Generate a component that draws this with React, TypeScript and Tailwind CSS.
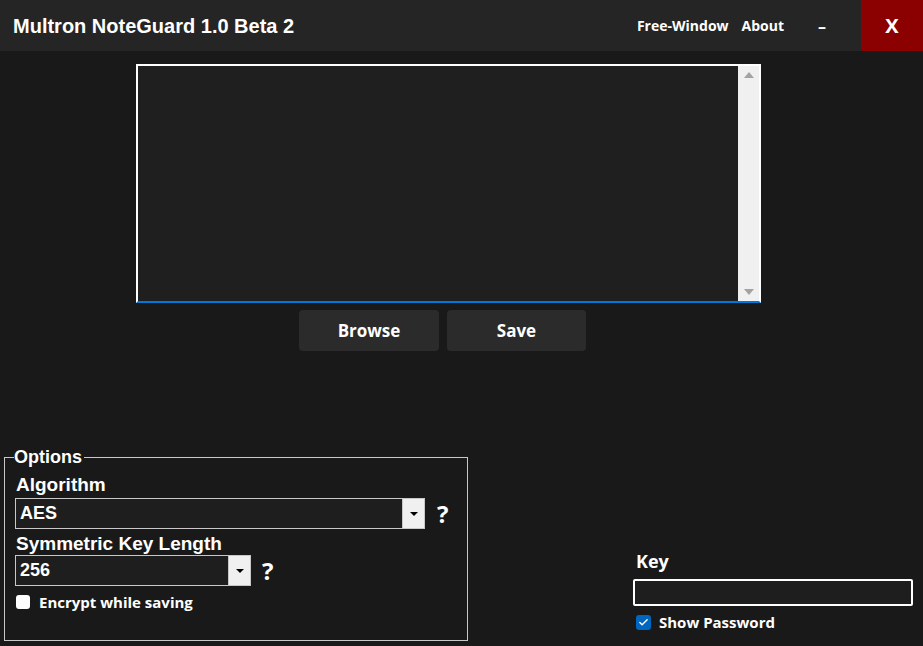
import { Check } from "lucide-react";

const arial = { fontFamily: '"Liberation Sans", Arial, sans-serif' };
const segoe = { fontFamily: '"Open Sans", "Noto Sans", sans-serif' };

function Select({ value, width }: { value: string; width: string }) {
  return (
    <div className={`flex h-[31px] ${width} border border-[#c8c8c8] bg-[#1e1e1e]`}>
      <div className="flex flex-1 items-center pl-[4px] text-[18px] font-bold text-white" style={arial}>
        {value}
      </div>
      <div className="flex w-[22px] items-center justify-center border-l border-[#c8c8c8] bg-[#f0f0f0]">
        <span className="h-0 w-0 border-x-[4px] border-t-[4px] border-x-transparent border-t-black" />
      </div>
    </div>
  );
}

export default function App() {
  return (
    <div className="flex h-[646px] w-[923px] flex-col overflow-hidden bg-[#191919] text-white">
      {/* title bar */}
      <div className="flex h-[51px] shrink-0 items-center bg-[#252525]">
        <div className="pl-[13px] text-[20px] font-bold" style={arial}>
          Multron NoteGuard 1.0 Beta 2
        </div>
        <div className="ml-auto flex h-full items-center text-[14px] font-bold" style={segoe}>
          <span className="mr-[13px]">Free-Window</span>
          <span>About</span>
          <span className="ml-[34px] mr-[35px] text-[16px]">–</span>
          <div className="flex h-full w-[62px] items-center justify-center bg-[#8b0000] text-[20px]" style={segoe}>
            X
          </div>
        </div>
      </div>

      {/* text area */}
      <div className="ml-[136px] mt-[13px] flex h-[239px] w-[625px] border-x-2 border-t-2 border-b-2 border-white border-b-[#0078d7] bg-[#1f1f1f]">
        <div className="flex-1" />
        <div className="flex w-[21px] flex-col items-center justify-between bg-[#f0f0f0] py-[6px]">
          <span className="h-0 w-0 border-x-[5px] border-b-[6px] border-x-transparent border-b-[#a3a3a3]" />
          <span className="h-0 w-0 border-x-[5px] border-t-[6px] border-x-transparent border-t-[#a3a3a3]" />
        </div>
      </div>

      {/* buttons */}
      <div className="ml-[299px] mt-[7px] flex gap-[8px]">
        <button className="h-[41px] w-[140px] rounded-[4px] bg-[#2b2b2b] text-[17px] font-bold leading-none" style={segoe}>
          Browse
        </button>
        <button className="h-[41px] w-[139px] rounded-[4px] bg-[#2b2b2b] text-[17px] font-bold leading-none" style={segoe}>
          Save
        </button>
      </div>

      {/* bottom */}
      <div className="mb-[5px] mt-auto flex items-end">
        <fieldset className="ml-[4px] h-[193px] w-[464px] border border-[#c8c8c8] px-[10px]">
          <legend className="-ml-[1px] px-0 pr-[2px] text-[18px] font-bold leading-[18px]" style={arial}>
            Options
          </legend>
          <div className="ml-[1px] mt-[8px] text-[19px] font-bold leading-[22px]" style={arial}>
            Algorithm
          </div>
          <div className="mt-[2px] flex h-[31px] items-center">
            <Select value="AES" width="w-[410px]" />
            <span className="ml-[12px] text-[24px] font-bold leading-none" style={segoe}>?</span>
          </div>
          <div className="ml-[1px] mt-[4px] text-[19px] font-bold leading-[22px]" style={arial}>
            Symmetric Key Length
          </div>
          <div className="mt-0 flex h-[31px] items-center">
            <Select value="256" width="w-[236px]" />
            <span className="ml-[11px] text-[24px] font-bold leading-none" style={segoe}>?</span>
          </div>
          <label className="mt-[6px] flex h-[20px] items-center gap-[9px] text-[15px] font-bold" style={segoe}>
            <span className="ml-[1px] h-[14px] w-[14px] rounded-[3px] bg-white" />
            Encrypt while saving
          </label>
        </fieldset>

        <div className="mb-[9px] ml-[165px] flex flex-col">
          <div className="ml-[3px] text-[18px] font-bold leading-[22px]" style={segoe}>
            Key
          </div>
          <div className="mt-[7px] h-[27px] w-[280px] rounded-[2px] border-2 border-white bg-[#1e1e1e]" />
          <label className="ml-[3px] mt-[6px] flex h-[20px] items-center gap-[8px] text-[15px] font-bold" style={segoe}>
            <span className="flex h-[15px] w-[15px] items-center justify-center rounded-[3px] bg-[#0067c0]">
              <Check size={11} strokeWidth={3} className="text-white" />
            </span>
            Show Password
          </label>
        </div>
      </div>
    </div>
  );
}
